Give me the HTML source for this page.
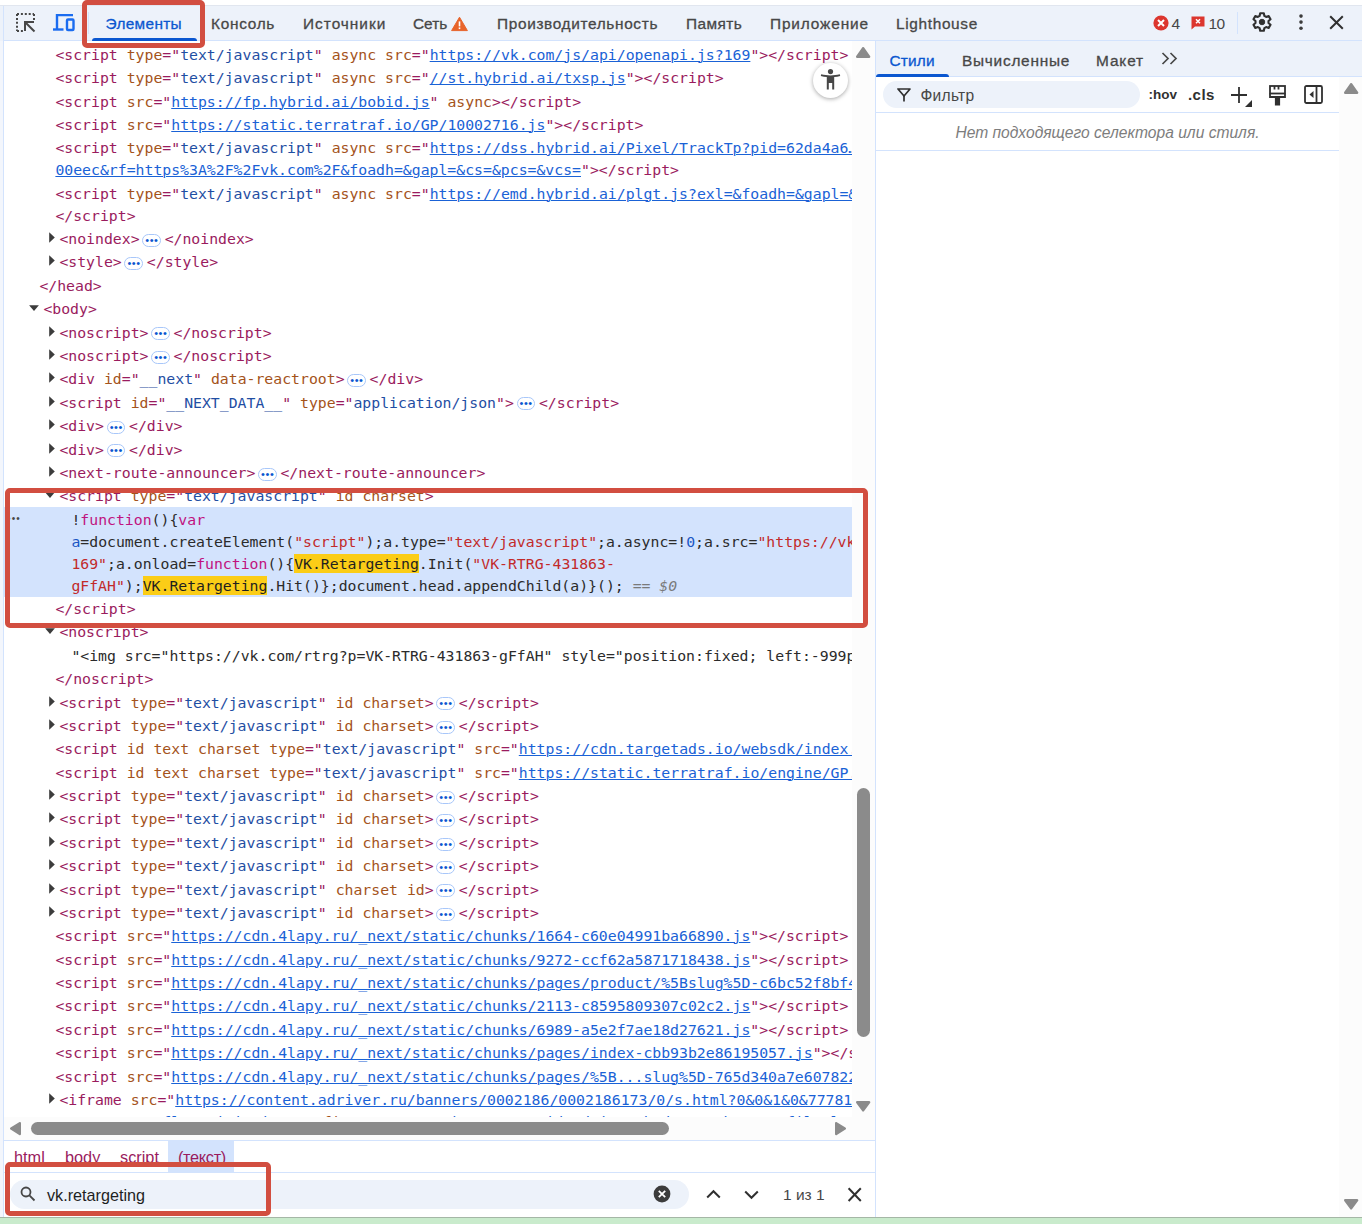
<!DOCTYPE html>
<html lang="ru">
<head>
<meta charset="utf-8">
<title>DevTools</title>
<style>
*{box-sizing:border-box}
html,body{margin:0;padding:0;background:#fff}
body{width:1362px;height:1224px;overflow:hidden;position:relative;font-family:"Liberation Sans","DejaVu Sans",sans-serif;color:#1f1f1f}
#root{position:absolute;left:0;top:0;width:1362px;height:1224px;overflow:hidden;background:#fff}
.abs{position:absolute}
/* left strip */
#lstrip{left:0;top:5px;width:4px;height:1212px;background:#f3f6fc;border-right:1px solid #d3e3fd}
#lstrip2{left:0;top:5px;width:3px;height:36px;background:#edf2fa}
/* main toolbar */
#tb{left:4px;top:5px;width:1358px;height:36px;background:#edf2fa;border-bottom:1px solid #d3e3fd}
.tab{position:absolute;top:0;height:36px;line-height:38px;font-size:15.4px;color:#474747;white-space:nowrap;-webkit-text-stroke:0.3px currentColor}
.tab.sel{color:#0b57d0}
#tabline{left:92px;top:38px;width:105px;height:3px;background:#0b57d0;border-radius:3px 3px 0 0}
.vsep{position:absolute;width:1px;background:#d3e3fd}
/* elements tree */
#tree{left:4px;top:41px;width:848px;height:1076px;overflow:hidden;background:#fff;font-family:"DejaVu Sans Mono","Liberation Mono",monospace;font-size:14.8px}
#treein{position:absolute;left:-4px;top:-41px;width:1362px;height:1224px}
.r{position:absolute;height:22px;line-height:22px;white-space:pre;color:#1f1f1f}
.t{color:#9a1b5e}.a{color:#a4531b}.v{color:#1f4ea3}.l{color:#1a62d6;text-decoration:underline;text-decoration-thickness:1px;text-underline-offset:1px}
.k{color:#c0137f}.s{color:#c22a2a}.n{color:#1a56c4}.p{color:#2b2b2b}.h{background:#fbcd17;color:#1f1f1f;padding:1px 0}
.d0{color:#7a7a7a;font-style:italic}
.ar{position:absolute;fill:#3c3c3c}
.dots{display:inline-block;vertical-align:middle;width:18.7px;height:13px;margin:0 3.7px 0 2.7px;border:1px solid #a8c7fa;border-radius:6.5px;background:#fff;position:relative;top:0.2px;overflow:hidden;font-family:"Liberation Sans",sans-serif;font-size:11px;line-height:11.200px;color:#0b57d0;text-align:center;letter-spacing:0.550px;padding-left:0.550px}
.hlband{position:absolute;left:4px;width:848px;background:#d3e3fd}
.hldots{position:absolute;left:7.050px;height:22px;line-height:22px;width:24px;font-family:"Liberation Sans",sans-serif;font-size:10px;letter-spacing:1.150px;color:#474747;white-space:nowrap}
/* scrollbars */
#vs{left:852px;top:41px;width:23px;height:1076px;background:#fcfcfc}
#hs{left:4px;top:1117px;width:871px;height:23px;background:#fcfcfc}
.thumb{position:absolute;background:#8b8b8b;border-radius:7px}
.sarrow{position:absolute;fill:#8b8b8b}
/* splitter */
#split{left:875px;top:41px;width:1px;height:1176px;background:#d3e3fd}
/* crumbs */
#crumbs{left:4px;top:1140px;width:871px;height:33px;background:#fff;border-top:1px solid #d3e3fd;border-bottom:1px solid #d3e3fd;font-size:16.3px;color:#9a1b5e}
.cr{position:absolute;top:0;height:31px;line-height:33px;white-space:nowrap}
#crsel{position:absolute;left:164px;top:0;width:66px;height:31px;background:#d3e3fd}
/* search */
#search{left:4px;top:1173px;width:871px;height:44px;background:#fff}
#pill{position:absolute;left:6px;top:6.600px;width:679px;height:29px;border-radius:14.500px;background:#edf2fa}
#stext{position:absolute;left:43px;top:7px;height:30px;line-height:30px;font-size:16.2px;color:#1f1f1f;white-space:nowrap}
/* right panel */
#rp{left:876px;top:41px;width:486px;height:1176px;background:#fff}
#rptabs{position:absolute;left:0;top:0;width:486px;height:36px;background:#edf2fa;border-bottom:1px solid #d3e3fd}
.rtab{position:absolute;top:0;height:36px;line-height:39.500px;font-size:15.4px;color:#474747;white-space:nowrap;-webkit-text-stroke:0.3px currentColor}
.rtab.sel{color:#0b57d0}
#rtabline{position:absolute;left:0;top:33px;width:72.500px;height:3px;background:#0b57d0;border-radius:3px 3px 0 0}
#frow{position:absolute;left:0;top:36px;width:463px;height:36px;border-bottom:1px solid #d3e3fd;background:#fff}
#fpill{position:absolute;left:7px;top:4px;width:257px;height:27px;border-radius:14px;background:#edf2fa}
#ftext{position:absolute;left:44.500px;top:4px;height:27px;line-height:30px;font-size:15.6px;color:#474747;letter-spacing:0.25px}
.fbtn{position:absolute;top:4px;height:27px;line-height:27px;font-size:15px;color:#303030;font-weight:bold;white-space:nowrap;letter-spacing:-0.3px}
#nosel{position:absolute;left:0;top:72px;width:463px;height:38px;line-height:40px;text-align:center;font-style:italic;font-size:15.6px;color:#7d7d7d;border-bottom:1px solid #d3e3fd;white-space:nowrap}
#rvs{position:absolute;left:463px;top:36px;width:23px;height:1140px;background:#fcfcfc}
/* bottom strip */
#green{left:0;top:1217px;width:1362px;height:7px;background:#c9ebcc;border-top:1.300px solid #a5b7a6}
/* red annotation boxes */
.red{position:absolute;border:5px solid #d24e40;border-radius:5px;background:transparent}
svg{display:block}
</style>
</head>
<body>
<div id="root">
  <div id="lstrip" class="abs"></div>
  <div id="lstrip2" class="abs"></div>

  <div id="tb" class="abs">
    <!-- inspect icon -->
    <svg class="abs" style="left:12px;top:8px" width="20" height="20" viewBox="0 0 20 20" fill="none" stroke="#474747">
      <path d="M1 1h17" stroke-width="2" stroke-dasharray="2 1.9"/>
      <path d="M1 1v17" stroke-width="2" stroke-dasharray="2 1.9"/>
      <path d="M18 1v6" stroke-width="2" stroke-dasharray="2 1.9"/>
      <path d="M1 18h6" stroke-width="2" stroke-dasharray="2 1.9"/>
      <path d="M9 18V9h9" stroke-width="2"/>
      <path d="M9.7 9.7L18.5 18.5" stroke-width="2"/>
    </svg>
    <!-- device icon -->
    <svg class="abs" style="left:49px;top:9px" width="22" height="18" viewBox="0 0 22 18" fill="none" stroke="#1a6cf0" stroke-width="2.400">
      <path d="M20 1H4v14"/>
      <path d="M0 15.5h10.5"/>
      <rect x="14" y="5.5" width="6.5" height="10.5" rx="1"/>
    </svg>
    <div class="vsep" style="left:84px;top:7px;height:22px"></div>
    <div class="tab sel" style="left:101.5px;letter-spacing:0.33px">Элементы</div>
    <div class="tab" style="left:207px;letter-spacing:0.71px">Консоль</div>
    <div class="tab" style="left:299px;letter-spacing:1px">Источники</div>
    <div class="tab" style="left:409px">Сеть</div>
    <!-- warning triangle -->
    <svg class="abs" style="left:446px;top:11px" width="19" height="16" viewBox="0 0 19 16"><path d="M9.500 1.200 L17.400 14.600 H1.600 Z" fill="#e8642a" stroke="#e8642a" stroke-width="1" stroke-linejoin="round"/><rect x="8.700" y="5.400" width="1.600" height="5" fill="#fff"/><rect x="8.700" y="11.400" width="1.600" height="1.700" fill="#fff"/></svg>
    <div class="tab" style="left:493px;letter-spacing:0.65px">Производительность</div>
    <div class="tab" style="left:682px;letter-spacing:0.43px">Память</div>
    <div class="tab" style="left:766px;letter-spacing:0.87px">Приложение</div>
    <div class="tab" style="left:892px;letter-spacing:0.66px">Lighthouse</div>
    <!-- error count -->
    <svg class="abs" style="left:1148.500px;top:9.500px" width="16" height="16" viewBox="0 0 16 16"><circle cx="8" cy="8" r="7.6" fill="#dc362e"/><path d="M5 5l6 6M11 5l-6 6" stroke="#fff" stroke-width="2"/></svg>
    <div class="tab" style="left:1167.5px;font-size:15.5px;-webkit-text-stroke:0">4</div>
    <svg class="abs" style="left:1187px;top:11px" width="14" height="14" viewBox="0 0 14 14"><path d="M0.5 0.5h13v10h-9.5l-3.5 3z" fill="#dc362e"/><path d="M5 3.2l4 4M9 3.2l-4 4" stroke="#fff" stroke-width="1.5"/></svg>
    <div class="tab" style="left:1204.5px;font-size:15.5px;letter-spacing:-0.5px;-webkit-text-stroke:0">10</div>
    <div class="vsep" style="left:1233px;top:7px;height:22px"></div>
    <!-- gear -->
    <svg class="abs" style="left:1247.400px;top:5.900px" width="22" height="22" viewBox="0 0 24 24" fill="none" stroke="#303030" stroke-width="2.300" stroke-linejoin="round"><path d="M10 2.500h4l.6 2.900 1.900 1.100 2.800-1 2 3.500-2.200 1.900v2.200l2.200 1.900-2 3.500-2.800-1-1.900 1.100-.6 2.900h-4l-.6-2.900-1.900-1.100-2.800 1-2-3.500 2.200-1.900v-2.200L2.700 9l2-3.500 2.800 1 1.900-1.100z"/><circle cx="12" cy="12" r="3" fill="#303030" stroke-width="1"/></svg>
    <!-- kebab -->
    <svg class="abs" style="left:1293.500px;top:8px" width="6" height="18" viewBox="0 0 6 18" fill="#3c3c3c"><circle cx="3" cy="3.100" r="1.800"/><circle cx="3" cy="9.100" r="1.800"/><circle cx="3" cy="15.200" r="1.800"/></svg>
    <!-- close -->
    <svg class="abs" style="left:1325.400px;top:10px" width="15" height="15" viewBox="0 0 15 15" stroke="#303030" stroke-width="2"><path d="M1.200 1.200l12.600 12.600M13.800 1.200L1.200 13.800"/></svg>
  </div>
  <div id="tabline" class="abs"></div>
  <div class="abs" style="left:0;top:5px;width:1362px;height:1px;background:#e1e6ef"></div>

  <div id="tree" class="abs"><div id="treein">
<div class="hlband" style="top:506.84px;height:90.47px"></div><div class="hldots" style="top:507.74px">•••</div>
<div class="r" style="left:55.40px;top:43.80px"><span class="t">&lt;script</span> <span class="a">type</span><span class="t">=&quot;</span><span class="v">text/javascript</span><span class="t">&quot;</span> <span class="a">async</span> <span class="a">src</span><span class="t">=&quot;</span><span class="l">https://vk.com/js/api/openapi.js?169</span><span class="t">&quot;</span><span class="t">&gt;&lt;/script&gt;</span></div>
<div class="r" style="left:55.40px;top:67.18px"><span class="t">&lt;script</span> <span class="a">type</span><span class="t">=&quot;</span><span class="v">text/javascript</span><span class="t">&quot;</span> <span class="a">async</span> <span class="a">src</span><span class="t">=&quot;</span><span class="l">//st.hybrid.ai/txsp.js</span><span class="t">&quot;</span><span class="t">&gt;&lt;/script&gt;</span></div>
<div class="r" style="left:55.40px;top:90.56px"><span class="t">&lt;script</span> <span class="a">src</span><span class="t">=&quot;</span><span class="l">https://fp.hybrid.ai/bobid.js</span><span class="t">&quot;</span> <span class="a">async</span><span class="t">&gt;&lt;/script&gt;</span></div>
<div class="r" style="left:55.40px;top:113.94px"><span class="t">&lt;script</span> <span class="a">src</span><span class="t">=&quot;</span><span class="l">https://static.terratraf.io/GP/10002716.js</span><span class="t">&quot;</span><span class="t">&gt;&lt;/script&gt;</span></div>
<div class="r" style="left:55.40px;top:137.32px"><span class="t">&lt;script</span> <span class="a">type</span><span class="t">=&quot;</span><span class="v">text/javascript</span><span class="t">&quot;</span> <span class="a">async</span> <span class="a">src</span><span class="t">=&quot;</span><span class="l">https://dss.hybrid.ai/Pixel/TrackTp?pid=62da4a6…</span></div>
<div class="r" style="left:55.40px;top:159.32px"><span class="l">00eec&amp;rf=https%3A%2F%2Fvk.com%2F&amp;foadh=&amp;gapl=&amp;cs=&amp;pcs=&amp;vcs=</span><span class="t">&quot;&gt;&lt;/script&gt;</span></div>
<div class="r" style="left:55.40px;top:182.70px"><span class="t">&lt;script</span> <span class="a">type</span><span class="t">=&quot;</span><span class="v">text/javascript</span><span class="t">&quot;</span> <span class="a">async</span> <span class="a">src</span><span class="t">=&quot;</span><span class="l">https://emd.hybrid.ai/plgt.js?exl=&amp;foadh=&amp;gapl=&amp;cs=&amp;pcs=</span></div>
<div class="r" style="left:55.40px;top:204.70px"><span class="t">&lt;/script&gt;</span></div>
<svg class="ar" style="left:49.10px;top:232.08px" width="6" height="11" viewBox="0 0 6 11"><path d="M0.2 0.2 L5.8 5.5 L0.2 10.8 Z"/></svg>
<div class="r" style="left:59.40px;top:228.08px"><span class="t">&lt;noindex&gt;</span><span class="dots">•••</span><span class="t">&lt;/noindex&gt;</span></div>
<svg class="ar" style="left:49.10px;top:255.46px" width="6" height="11" viewBox="0 0 6 11"><path d="M0.2 0.2 L5.8 5.5 L0.2 10.8 Z"/></svg>
<div class="r" style="left:59.40px;top:251.46px"><span class="t">&lt;style&gt;</span><span class="dots">•••</span><span class="t">&lt;/style&gt;</span></div>
<div class="r" style="left:39.40px;top:274.84px"><span class="t">&lt;/head&gt;</span></div>
<svg class="ar" style="left:29.40px;top:304.62px" width="10" height="6" viewBox="0 0 10 6"><path d="M0.1 0.2 L9.9 0.2 L5 5.9 Z"/></svg>
<div class="r" style="left:43.40px;top:298.22px"><span class="t">&lt;body&gt;</span></div>
<svg class="ar" style="left:49.10px;top:325.60px" width="6" height="11" viewBox="0 0 6 11"><path d="M0.2 0.2 L5.8 5.5 L0.2 10.8 Z"/></svg>
<div class="r" style="left:59.40px;top:321.60px"><span class="t">&lt;noscript&gt;</span><span class="dots">•••</span><span class="t">&lt;/noscript&gt;</span></div>
<svg class="ar" style="left:49.10px;top:348.98px" width="6" height="11" viewBox="0 0 6 11"><path d="M0.2 0.2 L5.8 5.5 L0.2 10.8 Z"/></svg>
<div class="r" style="left:59.40px;top:344.98px"><span class="t">&lt;noscript&gt;</span><span class="dots">•••</span><span class="t">&lt;/noscript&gt;</span></div>
<svg class="ar" style="left:49.10px;top:372.36px" width="6" height="11" viewBox="0 0 6 11"><path d="M0.2 0.2 L5.8 5.5 L0.2 10.8 Z"/></svg>
<div class="r" style="left:59.40px;top:368.36px"><span class="t">&lt;div</span> <span class="a">id</span><span class="t">=&quot;</span><span class="v">__next</span><span class="t">&quot;</span> <span class="a">data-reactroot</span><span class="t">&gt;</span><span class="dots">•••</span><span class="t">&lt;/div&gt;</span></div>
<svg class="ar" style="left:49.10px;top:395.74px" width="6" height="11" viewBox="0 0 6 11"><path d="M0.2 0.2 L5.8 5.5 L0.2 10.8 Z"/></svg>
<div class="r" style="left:59.40px;top:391.74px"><span class="t">&lt;script</span> <span class="a">id</span><span class="t">=&quot;</span><span class="v">__NEXT_DATA__</span><span class="t">&quot;</span> <span class="a">type</span><span class="t">=&quot;</span><span class="v">application/json</span><span class="t">&quot;</span><span class="t">&gt;</span><span class="dots">•••</span><span class="t">&lt;/script&gt;</span></div>
<svg class="ar" style="left:49.10px;top:419.12px" width="6" height="11" viewBox="0 0 6 11"><path d="M0.2 0.2 L5.8 5.5 L0.2 10.8 Z"/></svg>
<div class="r" style="left:59.40px;top:415.12px"><span class="t">&lt;div&gt;</span><span class="dots">•••</span><span class="t">&lt;/div&gt;</span></div>
<svg class="ar" style="left:49.10px;top:442.50px" width="6" height="11" viewBox="0 0 6 11"><path d="M0.2 0.2 L5.8 5.5 L0.2 10.8 Z"/></svg>
<div class="r" style="left:59.40px;top:438.50px"><span class="t">&lt;div&gt;</span><span class="dots">•••</span><span class="t">&lt;/div&gt;</span></div>
<svg class="ar" style="left:49.10px;top:465.88px" width="6" height="11" viewBox="0 0 6 11"><path d="M0.2 0.2 L5.8 5.5 L0.2 10.8 Z"/></svg>
<div class="r" style="left:59.40px;top:461.88px"><span class="t">&lt;next-route-announcer&gt;</span><span class="dots">•••</span><span class="t">&lt;/next-route-announcer&gt;</span></div>
<svg class="ar" style="left:45.40px;top:491.66px" width="10" height="6" viewBox="0 0 10 6"><path d="M0.1 0.2 L9.9 0.2 L5 5.9 Z"/></svg>
<div class="r" style="left:59.40px;top:485.26px"><span class="t">&lt;script</span> <span class="a">type</span><span class="t">=&quot;</span><span class="v">text/javascript</span><span class="t">&quot;</span> <span class="a">id</span> <span class="a">charset</span><span class="t">&gt;</span></div>
<div class="r" style="left:71.40px;top:508.64px"><span class="p">!</span><span class="k">function</span><span class="p">(){</span><span class="k">var</span></div>
<div class="r" style="left:71.40px;top:530.64px"><span class="n">a</span><span class="p">=document.createElement(</span><span class="s">&quot;script&quot;</span><span class="p">);a.type=</span><span class="s">&quot;text/javascript&quot;</span><span class="p">;a.async=!</span><span class="n">0</span><span class="p">;a.src=</span><span class="s">&quot;https://vk.com/js/api/openapi.js?</span></div>
<div class="r" style="left:71.40px;top:552.64px"><span class="s">169&quot;</span><span class="p">;a.onload=</span><span class="k">function</span><span class="p">(){</span><span class="h">VK.Retargeting</span><span class="p">.Init(</span><span class="s">&quot;VK-RTRG-431863-</span></div>
<div class="r" style="left:71.40px;top:574.64px"><span class="s">gFfAH&quot;</span><span class="p">);</span><span class="h">VK.Retargeting</span><span class="p">.Hit()};document.head.appendChild(a)}();</span><span class="d0"> == $0</span></div>
<div class="r" style="left:55.40px;top:598.02px"><span class="t">&lt;/script&gt;</span></div>
<svg class="ar" style="left:45.40px;top:627.80px" width="10" height="6" viewBox="0 0 10 6"><path d="M0.1 0.2 L9.9 0.2 L5 5.9 Z"/></svg>
<div class="r" style="left:59.40px;top:621.40px"><span class="t">&lt;noscript&gt;</span></div>
<div class="r" style="left:71.40px;top:644.78px"><span class="p">&quot;&lt;img src=</span><span class="p">&quot;</span><span class="p">https://vk.com/rtrg?p=VK-RTRG-431863-gFfAH&quot; style=&quot;position:fixed; left:-999px;&quot; alt=&quot;&quot;/&gt;&quot;</span></div>
<div class="r" style="left:55.40px;top:668.16px"><span class="t">&lt;/noscript&gt;</span></div>
<svg class="ar" style="left:49.10px;top:695.54px" width="6" height="11" viewBox="0 0 6 11"><path d="M0.2 0.2 L5.8 5.5 L0.2 10.8 Z"/></svg>
<div class="r" style="left:59.40px;top:691.54px"><span class="t">&lt;script</span> <span class="a">type</span><span class="t">=&quot;</span><span class="v">text/javascript</span><span class="t">&quot;</span> <span class="a">id</span> <span class="a">charset</span><span class="t">&gt;</span><span class="dots">•••</span><span class="t">&lt;/script&gt;</span></div>
<svg class="ar" style="left:49.10px;top:718.92px" width="6" height="11" viewBox="0 0 6 11"><path d="M0.2 0.2 L5.8 5.5 L0.2 10.8 Z"/></svg>
<div class="r" style="left:59.40px;top:714.92px"><span class="t">&lt;script</span> <span class="a">type</span><span class="t">=&quot;</span><span class="v">text/javascript</span><span class="t">&quot;</span> <span class="a">id</span> <span class="a">charset</span><span class="t">&gt;</span><span class="dots">•••</span><span class="t">&lt;/script&gt;</span></div>
<div class="r" style="left:55.40px;top:738.30px"><span class="t">&lt;script</span> <span class="a">id</span> <span class="a">text</span> <span class="a">charset</span> <span class="a">type</span><span class="t">=&quot;</span><span class="v">text/javascript</span><span class="t">&quot;</span> <span class="a">src</span><span class="t">=&quot;</span><span class="l">https://cdn.targetads.io/websdk/index.js</span><span class="t">&quot;</span><span class="t">&gt;&lt;/script&gt;</span></div>
<div class="r" style="left:55.40px;top:761.68px"><span class="t">&lt;script</span> <span class="a">id</span> <span class="a">text</span> <span class="a">charset</span> <span class="a">type</span><span class="t">=&quot;</span><span class="v">text/javascript</span><span class="t">&quot;</span> <span class="a">src</span><span class="t">=&quot;</span><span class="l">https://static.terratraf.io/engine/GP.js</span><span class="t">&quot;</span><span class="t">&gt;&lt;/script&gt;</span></div>
<svg class="ar" style="left:49.10px;top:789.06px" width="6" height="11" viewBox="0 0 6 11"><path d="M0.2 0.2 L5.8 5.5 L0.2 10.8 Z"/></svg>
<div class="r" style="left:59.40px;top:785.06px"><span class="t">&lt;script</span> <span class="a">type</span><span class="t">=&quot;</span><span class="v">text/javascript</span><span class="t">&quot;</span> <span class="a">id</span> <span class="a">charset</span><span class="t">&gt;</span><span class="dots">•••</span><span class="t">&lt;/script&gt;</span></div>
<svg class="ar" style="left:49.10px;top:812.44px" width="6" height="11" viewBox="0 0 6 11"><path d="M0.2 0.2 L5.8 5.5 L0.2 10.8 Z"/></svg>
<div class="r" style="left:59.40px;top:808.44px"><span class="t">&lt;script</span> <span class="a">type</span><span class="t">=&quot;</span><span class="v">text/javascript</span><span class="t">&quot;</span> <span class="a">id</span> <span class="a">charset</span><span class="t">&gt;</span><span class="dots">•••</span><span class="t">&lt;/script&gt;</span></div>
<svg class="ar" style="left:49.10px;top:835.82px" width="6" height="11" viewBox="0 0 6 11"><path d="M0.2 0.2 L5.8 5.5 L0.2 10.8 Z"/></svg>
<div class="r" style="left:59.40px;top:831.82px"><span class="t">&lt;script</span> <span class="a">type</span><span class="t">=&quot;</span><span class="v">text/javascript</span><span class="t">&quot;</span> <span class="a">id</span> <span class="a">charset</span><span class="t">&gt;</span><span class="dots">•••</span><span class="t">&lt;/script&gt;</span></div>
<svg class="ar" style="left:49.10px;top:859.20px" width="6" height="11" viewBox="0 0 6 11"><path d="M0.2 0.2 L5.8 5.5 L0.2 10.8 Z"/></svg>
<div class="r" style="left:59.40px;top:855.20px"><span class="t">&lt;script</span> <span class="a">type</span><span class="t">=&quot;</span><span class="v">text/javascript</span><span class="t">&quot;</span> <span class="a">id</span> <span class="a">charset</span><span class="t">&gt;</span><span class="dots">•••</span><span class="t">&lt;/script&gt;</span></div>
<svg class="ar" style="left:49.10px;top:882.58px" width="6" height="11" viewBox="0 0 6 11"><path d="M0.2 0.2 L5.8 5.5 L0.2 10.8 Z"/></svg>
<div class="r" style="left:59.40px;top:878.58px"><span class="t">&lt;script</span> <span class="a">type</span><span class="t">=&quot;</span><span class="v">text/javascript</span><span class="t">&quot;</span> <span class="a">charset</span> <span class="a">id</span><span class="t">&gt;</span><span class="dots">•••</span><span class="t">&lt;/script&gt;</span></div>
<svg class="ar" style="left:49.10px;top:905.96px" width="6" height="11" viewBox="0 0 6 11"><path d="M0.2 0.2 L5.8 5.5 L0.2 10.8 Z"/></svg>
<div class="r" style="left:59.40px;top:901.96px"><span class="t">&lt;script</span> <span class="a">type</span><span class="t">=&quot;</span><span class="v">text/javascript</span><span class="t">&quot;</span> <span class="a">id</span> <span class="a">charset</span><span class="t">&gt;</span><span class="dots">•••</span><span class="t">&lt;/script&gt;</span></div>
<div class="r" style="left:55.40px;top:925.34px"><span class="t">&lt;script</span> <span class="a">src</span><span class="t">=&quot;</span><span class="l">https://cdn.4lapy.ru/_next/static/chunks/1664-c60e04991ba66890.js</span><span class="t">&quot;</span><span class="t">&gt;&lt;/script&gt;</span></div>
<div class="r" style="left:55.40px;top:948.72px"><span class="t">&lt;script</span> <span class="a">src</span><span class="t">=&quot;</span><span class="l">https://cdn.4lapy.ru/_next/static/chunks/9272-ccf62a5871718438.js</span><span class="t">&quot;</span><span class="t">&gt;&lt;/script&gt;</span></div>
<div class="r" style="left:55.40px;top:972.10px"><span class="t">&lt;script</span> <span class="a">src</span><span class="t">=&quot;</span><span class="l">https://cdn.4lapy.ru/_next/static/chunks/pages/product/%5Bslug%5D-c6bc52f8bf4a1b2c.js</span><span class="t">&quot;</span><span class="t">&gt;&lt;/script&gt;</span></div>
<div class="r" style="left:55.40px;top:995.48px"><span class="t">&lt;script</span> <span class="a">src</span><span class="t">=&quot;</span><span class="l">https://cdn.4lapy.ru/_next/static/chunks/2113-c8595809307c02c2.js</span><span class="t">&quot;</span><span class="t">&gt;&lt;/script&gt;</span></div>
<div class="r" style="left:55.40px;top:1018.86px"><span class="t">&lt;script</span> <span class="a">src</span><span class="t">=&quot;</span><span class="l">https://cdn.4lapy.ru/_next/static/chunks/6989-a5e2f7ae18d27621.js</span><span class="t">&quot;</span><span class="t">&gt;&lt;/script&gt;</span></div>
<div class="r" style="left:55.40px;top:1042.24px"><span class="t">&lt;script</span> <span class="a">src</span><span class="t">=&quot;</span><span class="l">https://cdn.4lapy.ru/_next/static/chunks/pages/index-cbb93b2e86195057.js</span><span class="t">&quot;</span><span class="t">&gt;&lt;/script&gt;</span></div>
<div class="r" style="left:55.40px;top:1065.62px"><span class="t">&lt;script</span> <span class="a">src</span><span class="t">=&quot;</span><span class="l">https://cdn.4lapy.ru/_next/static/chunks/pages/%5B...slug%5D-765d340a7e607822.js</span><span class="t">&quot;</span><span class="t">&gt;&lt;/script&gt;</span></div>
<svg class="ar" style="left:49.10px;top:1093.00px" width="6" height="11" viewBox="0 0 6 11"><path d="M0.2 0.2 L5.8 5.5 L0.2 10.8 Z"/></svg>
<div class="r" style="left:59.40px;top:1089.00px"><span class="t">&lt;iframe</span> <span class="a">src</span><span class="t">=&quot;</span><span class="l">https://content.adriver.ru/banners/0002186/0002186173/0/s.html?0&amp;0&amp;1&amp;0&amp;777811234</span></div>
<div class="r" style="left:162.33px;top:1111.00px"><span class="l">flat.ai/in.js</span><span class="t">&quot;</span> <span class="a">prefix</span><span class="t">=&quot;</span><span class="l">://an.yandex.ru/mapuid/adriver/kod.news.banner.file.load.html?id=sun.moon.bad.lift.data</span></div>
  </div></div>

  <!-- accessibility floating button -->
  <div class="abs" style="left:813px;top:62.500px;width:35px;height:35px;border-radius:50%;background:#fff;box-shadow:0 1px 4px rgba(0,0,0,.35)"></div>
  <svg class="abs" style="left:820px;top:69px" width="21" height="22" viewBox="0 0 21 22" fill="#474747"><circle cx="10.5" cy="2.600" r="2.600"/><path d="M1.2 5.3c3 .8 6 1.100 9.300 1.100s6.300-.3 9.300-1.100l.4 1.700c-2 .6-4 .9-6 1.100V20.500h-2V14h-3.400v6.500h-2V8.100c-2-.2-4-.5-6-1.100z"/></svg>

  <div id="vs" class="abs">
    <svg class="sarrow" style="left:4.400px;top:6.200px" width="15" height="11" viewBox="0 0 15 11"><path d="M7.150 1.200 L13.100 9.800 H1.200 Z" stroke="#8b8b8b" stroke-width="2.400" stroke-linejoin="round"/></svg>
    <div class="thumb" style="left:5px;top:747px;width:13px;height:249px"></div>
    <svg class="sarrow" style="left:4.400px;top:1059.500px" width="15" height="11" viewBox="0 0 15 11"><path d="M7.150 9.400 L13.100 1.200 H1.200 Z" stroke="#8b8b8b" stroke-width="2.400" stroke-linejoin="round"/></svg>
  </div>
  <div id="hs" class="abs">
    <svg class="sarrow" style="left:5.900px;top:5px" width="11" height="14" viewBox="0 0 11 14"><path d="M1.200 6.600 L9.800 1.200 V12 Z" stroke="#8b8b8b" stroke-width="2.400" stroke-linejoin="round"/></svg>
    <div class="thumb" style="left:27px;top:5px;width:638px;height:13px"></div>
    <svg class="sarrow" style="left:831.200px;top:5.200px" width="11" height="14" viewBox="0 0 11 14"><path d="M9.800 6.600 L1.200 1.200 V12 Z" stroke="#8b8b8b" stroke-width="2.400" stroke-linejoin="round"/></svg>
  </div>
  <div id="split" class="abs"></div>

  <div id="crumbs" class="abs">
    <div id="crsel"></div>
    <div class="cr" style="left:10px">html</div>
    <div class="cr" style="left:61px">body</div>
    <div class="cr" style="left:116px">script</div>
    <div class="cr" style="left:174px;letter-spacing:-0.3px">(текст)</div>
  </div>

  <div id="search" class="abs">
    <div id="pill"></div>
    <svg class="abs" style="left:16px;top:13px" width="16" height="16" viewBox="0 0 16 16" fill="none" stroke="#474747" stroke-width="1.800"><circle cx="6" cy="6" r="4.500"/><path d="M9.400 9.400L14.500 14.500"/></svg>
    <div id="stext">vk.retargeting</div>
    <svg class="abs" style="left:649px;top:12px" width="18" height="18" viewBox="0 0 18 18"><circle cx="9" cy="9" r="8.400" fill="#3c3c3c"/><path d="M5.800 5.800l6.400 6.400M12.200 5.800l-6.400 6.400" stroke="#fff" stroke-width="1.800"/></svg>
    <svg class="abs" style="left:702px;top:16px" width="15" height="10" viewBox="0 0 15 10" fill="none" stroke="#303030" stroke-width="2"><path d="M1.200 8.500L7.500 2.200l6.300 6.300"/></svg>
    <svg class="abs" style="left:740px;top:17px" width="15" height="10" viewBox="0 0 15 10" fill="none" stroke="#303030" stroke-width="2"><path d="M1.200 1.500L7.500 7.800l6.300-6.300"/></svg>
    <div class="abs" style="left:779px;top:7px;height:30px;line-height:30px;font-size:15.5px;color:#474747;white-space:nowrap">1 из 1</div>
    <svg class="abs" style="left:843px;top:13.500px" width="15" height="15" viewBox="0 0 15 15" stroke="#303030" stroke-width="2"><path d="M1.600 1.300l12.200 12.700M13.800 1.300L1.600 14"/></svg>
  </div>

  <div id="rp" class="abs">
    <div id="rptabs">
      <div class="rtab sel" style="left:13.500px;letter-spacing:0.2px">Стили</div>
      <div class="rtab" style="left:86px;letter-spacing:0.75px">Вычисленные</div>
      <div class="rtab" style="left:220px;letter-spacing:0.9px">Макет</div>
      <svg class="abs" style="left:285px;top:11px" width="18" height="13" viewBox="0 0 18 13" fill="none" stroke="#474747" stroke-width="1.700"><path d="M1.500 1l5.500 5.500L1.500 12M9.500 1l5.500 5.500L9.500 12"/></svg>
      <div id="rtabline"></div>
    </div>
    <div id="frow">
      <div id="fpill"></div>
      <svg class="abs" style="left:21px;top:11px" width="14" height="14" viewBox="0 0 14 14" fill="none" stroke="#303030" stroke-width="1.700" stroke-linejoin="round"><path d="M1 1h12L7 8z"/><path d="M7 8v5.500"/></svg>
      <div id="ftext">Фильтр</div>
      <div class="fbtn" style="left:272.500px;font-size:13.500px;letter-spacing:0">:hov</div>
      <div class="fbtn" style="left:312px;font-size:15px;letter-spacing:0.45px">.cls</div>
      <svg class="abs" style="left:354px;top:9px" width="24" height="22" viewBox="0 0 24 22" fill="none" stroke="#303030" stroke-width="1.800"><path d="M9 1v16M1 9h16"/><path d="M22 14v7h-7z" fill="#303030" stroke="none"/></svg>
      <svg class="abs" style="left:393px;top:8px" width="17" height="21" viewBox="0 0 17 21" fill="none" stroke="#303030" stroke-width="1.800"><rect x="1" y="1" width="15" height="7.500"/><path d="M5.500 1v3.500M9.500 1v3.500"/><path d="M1 8.500v3.500h15V8.500"/><path d="M6.800 12h3.400v7.500H6.800z" fill="#303030"/></svg>
      <svg class="abs" style="left:428px;top:8px" width="19" height="19" viewBox="0 0 19 19" fill="none" stroke="#303030" stroke-width="1.800"><rect x="1" y="1" width="17" height="17" rx="1.500"/><path d="M12.500 1v17"/><path d="M9.500 6v7L5.500 9.500z" fill="#303030" stroke="none"/></svg>
    </div>
    <div id="nosel">Нет подходящего селектора или стиля.</div>
    <div id="rvs">
      <svg class="sarrow" style="left:4.600px;top:6.400px" width="15" height="11" viewBox="0 0 15 11"><path d="M7.150 1.200 L13.100 9.800 H1.200 Z" stroke="#8b8b8b" stroke-width="2.400" stroke-linejoin="round"/></svg>
      <svg class="sarrow" style="left:4.600px;top:1122px" width="15" height="11" viewBox="0 0 15 11"><path d="M7.150 9.400 L13.100 1.200 H1.200 Z" stroke="#8b8b8b" stroke-width="2.400" stroke-linejoin="round"/></svg>
    </div>
  </div>

  <div id="green" class="abs"></div>

  <!-- red annotation rectangles -->
  <div class="red" style="left:81.500px;top:-0.500px;width:123px;height:48.500px"></div>
  <div class="red" style="left:4.800px;top:488px;width:863px;height:139.700px"></div>
  <div class="red" style="left:5px;top:1161.500px;width:266px;height:54px"></div>
</div>
</body>
</html>
